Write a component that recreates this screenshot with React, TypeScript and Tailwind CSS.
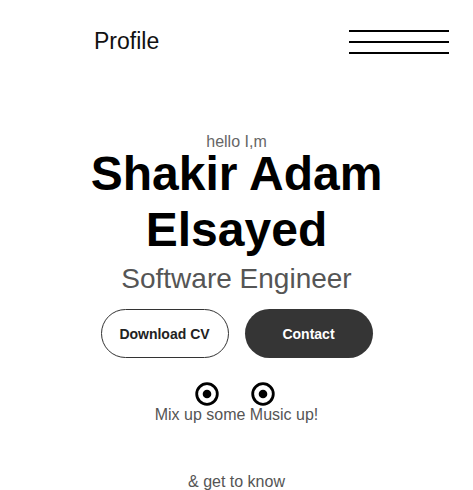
import { useState } from 'react';

function RadioIcon() {
  return (
    <svg width="24" height="24" viewBox="0 0 24 24" fill="none">
      <circle cx="12" cy="12" r="10.3" stroke="#000" strokeWidth="2.8" />
      <circle cx="12" cy="12" r="4.3" fill="#000" />
    </svg>
  );
}

export default function App() {
  const [menuOpen, setMenuOpen] = useState(false);

  return (
    <div className="min-h-screen bg-white font-['Liberation_Sans',Arial,sans-serif] text-black">
      {/* nav */}
      <nav className="flex h-[83px] items-center justify-between pl-[94px] pr-[24px]">
        <div className="text-[23px] leading-normal text-[#111]">Profile</div>
        <button
          onClick={() => setMenuOpen(!menuOpen)}
          className="flex w-[100px] flex-col gap-[9px]"
          aria-label="menu"
        >
          <span className="block h-[2px] w-full bg-black" />
          <span className="block h-[2px] w-full bg-black" />
          <span className="block h-[2px] w-full bg-black" />
        </button>
      </nav>

      {/* hero */}
      <section className="mt-[55px] flex flex-col items-center text-center">
        <p className="text-base leading-[8px] text-[#666]">hello I,m</p>
        <h1 className="text-[48px] font-bold leading-[56px]">
          Shakir Adam
          <br />
          Elsayed
        </h1>
        <p className="text-[28px] leading-normal text-[#555]">Software Engineer</p>

        <div className="mt-[9px] flex gap-4">
          <button className="h-[49px] w-32 rounded-full border border-[#333] bg-white text-sm font-semibold text-[#222]">
            Download CV
          </button>
          <button className="h-[49px] w-32 rounded-full bg-[#353535] text-sm font-semibold text-white">
            Contact
          </button>
        </div>

        <div className="mt-6 flex gap-8 pr-[3px]">
          <RadioIcon />
          <RadioIcon />
        </div>
        <p className="-mt-[3px] text-base leading-normal text-[#555]">Mix up some Music up!</p>

        <p className="mt-[43px] text-base leading-6 text-[#555]">&amp; get to know</p>
      </section>
    </div>
  );
}
